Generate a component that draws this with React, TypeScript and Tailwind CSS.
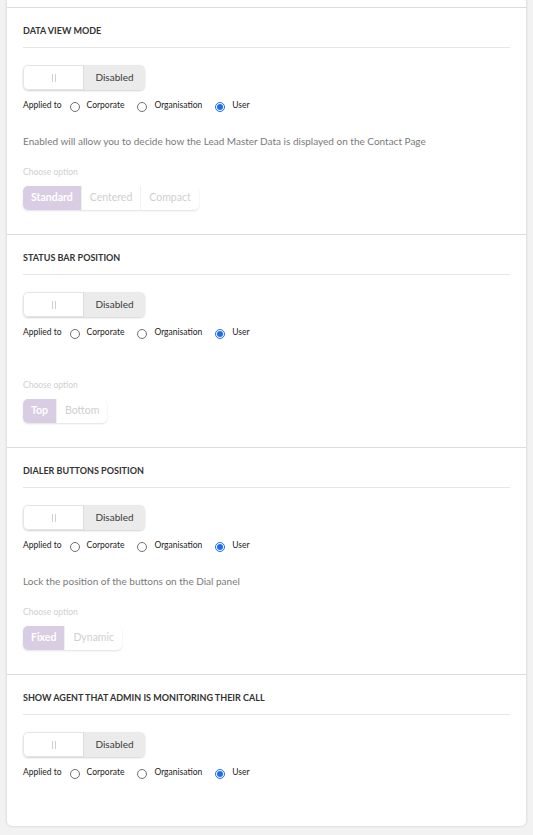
import React from 'react';

type Section = {
  title: string;
  description?: string;
  options?: string[];
  emptyDescription?: boolean;
  last?: boolean;
};

const sections: Section[] = [
  {
    title: 'Data View Mode',
    description: 'Enabled will allow you to decide how the Lead Master Data is displayed on the Contact Page',
    options: ['Standard', 'Centered', 'Compact'],
  },
  { title: 'Status Bar Position', emptyDescription: true, options: ['Top', 'Bottom'] },
  {
    title: 'Dialer Buttons Position',
    description: 'Lock the position of the buttons on the Dial panel',
    options: ['Fixed', 'Dynamic'],
  },
  { title: 'Show Agent That Admin Is Monitoring Their Call', last: true },
];

const Radio: React.FC<{ checked?: boolean }> = ({ checked }) =>
  checked ? (
    <span className="mt-[4px] flex h-[10px] w-[10px] shrink-0 items-center justify-center rounded-full border border-[#1b6ef0] bg-white">
      <span className="block h-[6px] w-[6px] rounded-full bg-[#1b6ef0]" />
    </span>
  ) : (
    <span className="mt-[4px] block h-[10px] w-[10px] shrink-0 rounded-full border border-[#6f6f6f] bg-white" />
  );

const Toggle: React.FC = () => (
  <div className="mt-[17px] flex h-[25px] w-[122px] overflow-hidden rounded-[5px] shadow-[0_1px_2px_rgba(0,0,0,0.18)]">
    <div className="flex w-[60px] items-center justify-center gap-[2px] rounded-l-[5px] border border-r-0 border-[#e4e4e4] bg-white">
      <span className="block h-[8px] w-px bg-[#cfcfcf]" />
      <span className="block h-[8px] w-px bg-[#cfcfcf]" />
    </div>
    <div className="flex flex-1 items-center justify-center border-l border-[#dcdcdc] bg-[#ebebeb] text-[10px] text-[#3a3a3a]">
      Disabled
    </div>
  </div>
);

const AppliedTo: React.FC = () => (
  <div className="mt-[8px] flex items-start text-[8.5px] leading-[14px] text-[#222]">
    <span>Applied to</span>
    <span className="ml-[8px] flex"><Radio /></span>
    <span className="ml-[7px]">Corporate</span>
    <span className="ml-[13px] flex"><Radio /></span>
    <span className="ml-[7px]">Organisation</span>
    <span className="ml-[13px] flex"><Radio checked /></span>
    <span className="ml-[7px]">User</span>
  </div>
);

const Segments: React.FC<{ options: string[] }> = ({ options }) => (
  <div className="mt-[8px] flex h-[24px] w-fit overflow-hidden rounded-[5px] bg-white shadow-[0_1px_2px_rgba(0,0,0,0.12)]">
    {options.map((o, i) => (
      <div
        key={o}
        className={
          i === 0
            ? 'flex items-center bg-[#d9cde3] px-2 text-[10.5px] font-bold text-white'
            : 'flex items-center border-l border-[#f0f0f0] px-2 text-[10.5px] text-[#cfcfcf]'
        }
      >
        {o}
      </div>
    ))}
  </div>
);

export default function App() {
  return (
    <div className="min-h-[835px] bg-[#f2f2f2] pb-[9px] font-['Lato','Liberation_Sans',sans-serif]">
      <div className="mx-[7px] rounded-b-[5px] bg-white pt-[7px] shadow-[0_0_3px_rgba(0,0,0,0.18)]">
        {sections.map((s) => (
          <div
            key={s.title}
            className={`border-t border-[#dcdcdc] px-4 pt-[16px] ${s.last ? 'pb-[47px]' : 'pb-[24px]'}`}
          >
            <div className="border-b border-[#e6e6e6] pb-[9px]">
              <h2 className="text-[9px] font-bold uppercase leading-[14px] text-[#333]">{s.title}</h2>
            </div>
            <Toggle />
            <AppliedTo />
            {s.description && (
              <p className="mt-[22px] text-[10px] leading-[14px] text-[#7a7a7a]">{s.description}</p>
            )}
            {s.options && (
              <>
                <p
                  className={`${s.emptyDescription ? 'mt-[40px]' : 'mt-[18px]'} text-[8.5px] leading-[12px] text-[#d0d0d0]`}
                >
                  Choose option
                </p>
                <Segments options={s.options} />
              </>
            )}
          </div>
        ))}
      </div>
    </div>
  );
}
